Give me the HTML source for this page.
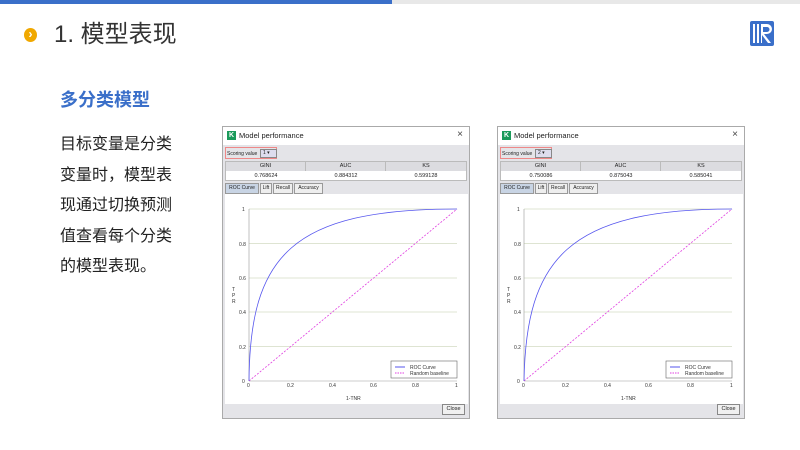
<!DOCTYPE html>
<html><head><meta charset="utf-8"><style>
*{margin:0;padding:0;box-sizing:border-box}
body{width:800px;height:450px;background:#fff;position:relative;overflow:hidden;font-family:"Liberation Sans","Noto Sans CJK SC",sans-serif}
.abs{position:absolute}
.win{position:absolute;width:248px;height:293px;border:1px solid #aaa;background:#e4e4e8;font-size:5.5px;color:#222}
.tb{position:absolute;left:0;top:0;width:246px;height:18px;background:#fff}
.tb .k{position:absolute;left:4px;top:4px;width:9px;height:9px;background:#1a9a5a;color:#fff;font-size:7px;font-weight:bold;text-align:center;line-height:9px}
.tb .t{position:absolute;left:16px;top:4px;font-size:7.5px}
.tb .x{position:absolute;right:6px;top:2px;font-size:10px;color:#444}
.sv{position:absolute;left:2px;top:20px;width:52px;height:12px;border:1px solid #e88;}
.tbl{position:absolute;left:2px;top:34px;width:242px;height:20px;background:#fff;border:1px solid #bbb}
.tbl div{position:absolute;top:0;height:9px;text-align:center;line-height:9px;background:#dcdce0;border-right:1px solid #bbb}
.tbl span{position:absolute;top:10px;text-align:center;line-height:9px}
.tabs{position:absolute;left:2px;top:56px;height:11px}
.tab{position:absolute;top:0;height:11px;border:1px solid #999;background:#eee;line-height:9px;text-align:center;font-size:5px}
.plot{position:absolute;left:2px;top:67px;width:243px;height:210px;background:#fff}
.cls{position:absolute;right:4px;bottom:3px;width:23px;height:11px;border:1px solid #888;background:#f0f0f0;font-size:5.5px;text-align:center;line-height:9px}
</style></head><body>
<div class="abs" style="left:0;top:0;width:392px;height:4px;background:#3a6fc9"></div>
<div class="abs" style="left:392px;top:0;width:408px;height:4px;background:#e8e8e8"></div>
<div class="abs" style="left:24px;top:28px;width:13px;height:14px;border-radius:50%;background:#f0a800;color:#fff;font-size:12px;font-weight:bold;text-align:center;line-height:13px">›</div>
<div class="abs" style="left:54px;top:19px;font-size:24px;color:#333;line-height:32px">1. 模型表现</div>
<svg class="abs" style="left:750px;top:21px" width="24" height="25" viewBox="0 0 24 25"><rect width="24" height="25" rx="2" fill="#3a6fc9"/><rect x="3" y="3" width="2" height="19" fill="#fff"/><rect x="7" y="3" width="2" height="19" fill="#fff"/><path d="M11 3h6a5 5 0 0 1 0 10h-3l7 9h-3l-6-8v8h-1z M13 6v5h4a2.5 2.5 0 0 0 0-5z" fill="#fff" fill-rule="evenodd"/></svg>
<div class="abs" style="left:60px;top:87px;font-size:18px;font-weight:bold;color:#3a6fc9;line-height:26px">多分类模型</div>
<div class="abs" style="left:60px;top:130px;width:120px;font-size:16px;color:#222;line-height:30.5px">目标变量是分类变量时，模型表现通过切换预测值查看每个分类的模型表现。</div>

<div class="win" style="left:222px;top:126px">
 <div class="tb"><div class="k">K</div><div class="t">Model performance</div><div class="x">×</div></div>
 <div class="sv"><span class="abs" style="left:1px;top:3px;font-size:5px">Scoring value</span><span class="abs" style="left:34px;top:1px;width:17px;height:9px;border:1px solid #888;background:#dde;font-size:5px;padding-left:2px;line-height:7px">1 ▾</span></div>
 <div class="tbl"><div style="left:0;width:80px">GINI</div><div style="left:80px;width:80px">AUC</div><div style="left:160px;width:80px;border:0">KS</div>
 <span style="left:0;width:80px">0.768624</span><span style="left:80px;width:80px">0.884312</span><span style="left:160px;width:80px">0.599128</span></div>
 <div class="tabs"><div class="tab" style="left:0;width:34px;background:#c8d4e4">ROC Curve</div><div class="tab" style="left:35px;width:12px">Lift</div><div class="tab" style="left:48px;width:20px">Recall</div><div class="tab" style="left:69px;width:29px">Accuracy</div></div>
 <div class="plot"><svg width="243" height="210" viewBox="224 193 243 210">
  <g stroke="#d4dcc4" stroke-width="0.8"><line x1="248" y1="208" x2="456" y2="208"/><line x1="248" y1="242.6" x2="456" y2="242.6"/><line x1="248" y1="277" x2="456" y2="277"/><line x1="248" y1="311" x2="456" y2="311"/><line x1="248" y1="345.6" x2="456" y2="345.6"/></g>
  <line x1="248" y1="380" x2="456" y2="380" stroke="#999" stroke-width="0.6"/><line x1="248" y1="208" x2="248" y2="380" stroke="#999" stroke-width="0.6"/>
  <line x1="248" y1="380" x2="456" y2="208" stroke="#e040e0" stroke-width="0.8" stroke-dasharray="2,1.5"/>
  <path d="M248,380 C249,255 290,208 456,208" fill="none" stroke="#5555ee" stroke-width="0.8"/>
  <g font-size="5" fill="#333" font-family="Liberation Sans"><text x="241" y="210">1</text><text x="238" y="245">0.8</text><text x="238" y="279">0.6</text><text x="238" y="313">0.4</text><text x="238" y="348">0.2</text><text x="241" y="382">0</text>
  <text x="246" y="386">0</text><text x="286" y="386">0.2</text><text x="328" y="386">0.4</text><text x="369" y="386">0.6</text><text x="411" y="386">0.8</text><text x="454" y="386">1</text>
  <text x="345" y="399">1-TNR</text><text x="231" y="290">T</text><text x="231" y="296">P</text><text x="231" y="302">R</text>
  <rect x="390" y="360" width="66" height="17" fill="#fff" stroke="#666" stroke-width="0.6"/><line x1="394" y1="366" x2="404" y2="366" stroke="#5555ee"/><line x1="394" y1="372" x2="404" y2="372" stroke="#e040e0" stroke-dasharray="1.5,1"/><text x="409" y="368">ROC Curve</text><text x="409" y="374">Random baseline</text></g>
 </svg></div>
 <div class="cls">Close</div>
</div>

<div class="win" style="left:497px;top:126px">
 <div class="tb"><div class="k">K</div><div class="t">Model performance</div><div class="x">×</div></div>
 <div class="sv"><span class="abs" style="left:1px;top:3px;font-size:5px">Scoring value</span><span class="abs" style="left:34px;top:1px;width:17px;height:9px;border:1px solid #888;background:#dde;font-size:5px;padding-left:2px;line-height:7px">2 ▾</span></div>
 <div class="tbl"><div style="left:0;width:80px">GINI</div><div style="left:80px;width:80px">AUC</div><div style="left:160px;width:80px;border:0">KS</div>
 <span style="left:0;width:80px">0.750086</span><span style="left:80px;width:80px">0.875043</span><span style="left:160px;width:80px">0.585041</span></div>
 <div class="tabs"><div class="tab" style="left:0;width:34px;background:#c8d4e4">ROC Curve</div><div class="tab" style="left:35px;width:12px">Lift</div><div class="tab" style="left:48px;width:20px">Recall</div><div class="tab" style="left:69px;width:29px">Accuracy</div></div>
 <div class="plot"><svg width="243" height="210" viewBox="224 193 243 210">
  <g stroke="#d4dcc4" stroke-width="0.8"><line x1="248" y1="208" x2="456" y2="208"/><line x1="248" y1="242.6" x2="456" y2="242.6"/><line x1="248" y1="277" x2="456" y2="277"/><line x1="248" y1="311" x2="456" y2="311"/><line x1="248" y1="345.6" x2="456" y2="345.6"/></g>
  <line x1="248" y1="380" x2="456" y2="380" stroke="#999" stroke-width="0.6"/><line x1="248" y1="208" x2="248" y2="380" stroke="#999" stroke-width="0.6"/>
  <line x1="248" y1="380" x2="456" y2="208" stroke="#e040e0" stroke-width="0.8" stroke-dasharray="2,1.5"/>
  <path d="M248,380 C250,258 292,208 456,208" fill="none" stroke="#5555ee" stroke-width="0.8"/>
  <g font-size="5" fill="#333" font-family="Liberation Sans"><text x="241" y="210">1</text><text x="238" y="245">0.8</text><text x="238" y="279">0.6</text><text x="238" y="313">0.4</text><text x="238" y="348">0.2</text><text x="241" y="382">0</text>
  <text x="246" y="386">0</text><text x="286" y="386">0.2</text><text x="328" y="386">0.4</text><text x="369" y="386">0.6</text><text x="411" y="386">0.8</text><text x="454" y="386">1</text>
  <text x="345" y="399">1-TNR</text><text x="231" y="290">T</text><text x="231" y="296">P</text><text x="231" y="302">R</text>
  <rect x="390" y="360" width="66" height="17" fill="#fff" stroke="#666" stroke-width="0.6"/><line x1="394" y1="366" x2="404" y2="366" stroke="#5555ee"/><line x1="394" y1="372" x2="404" y2="372" stroke="#e040e0" stroke-dasharray="1.5,1"/><text x="409" y="368">ROC Curve</text><text x="409" y="374">Random baseline</text></g>
 </svg></div>
 <div class="cls">Close</div>
</div>
</body></html>
